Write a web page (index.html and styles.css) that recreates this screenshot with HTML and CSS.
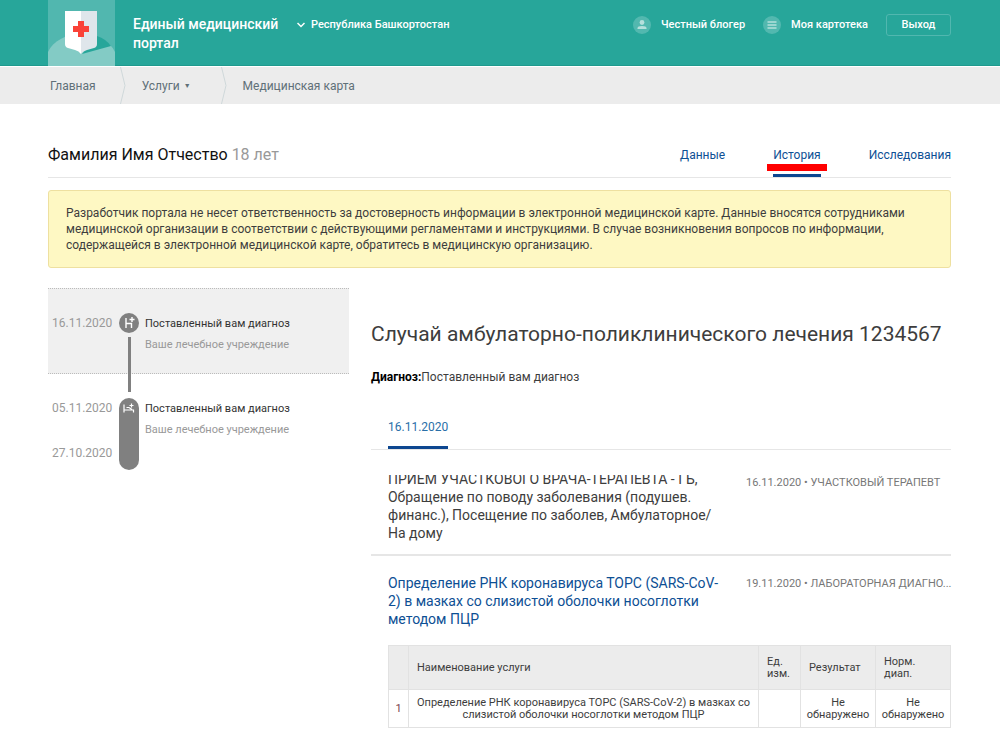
FILE: index.html
```
<!DOCTYPE html>
<html lang="ru">
<head>
<meta charset="utf-8">
<meta name="viewport" content="width=device-width, initial-scale=1">
<title>Единый медицинский портал</title>
<link rel="stylesheet" href="styles.css">
</head>
<body>
<header class="header">
  <a class="logo" href="#" aria-label="Главная страница портала">
    <svg viewBox="0 0 67 66" width="67" height="66" aria-hidden="true">
      <rect width="67" height="66" fill="#51b7af"/>
      <path d="M0 66V52C5 41 18 34 33 34C48 34 62 41 67 52V66Z" fill="#83cbc5"/>
      <path d="M34 54L49 36Q58 39 63 46Z" fill="#27a69a"/>
      <path d="M17 11H33V54Q31 51 27 50L20 48Q17 47 17 44Z" fill="#fff"/>
      <path d="M33 11H49V44Q49 47 46 48L39 50Q35 51 33 54Z" fill="#dfe6eb"/>
      <path d="M30 21H36V26H41V32H36V37H30V32H25V26H30Z" fill="#fa4238"/>
    </svg>
  </a>
  <a class="brand" href="#">Единый медицинский портал</a>
  <button class="region" type="button">
    <svg viewBox="0 0 8 6" width="8" height="6" aria-hidden="true"><path d="M0.500 1L4 4.500L7.500 1" fill="none" stroke="#fff" stroke-width="1.500"/></svg>
    Республика Башкортостан
  </button>
  <nav class="account" aria-label="Личный кабинет">
    <a class="account-link" href="#">
      <svg viewBox="0 0 18 18" width="18" height="18" aria-hidden="true"><circle cx="9" cy="9" r="9" fill="#52b8af"/><circle cx="9" cy="6.500" r="2.400" fill="#b5e0dc"/><path d="M4.500 13V12Q4.500 10 9 10Q13.500 10 13.500 12V13Z" fill="#b5e0dc"/></svg>
      Честный блогер
    </a>
    <a class="account-link" href="#">
      <svg viewBox="0 0 18 18" width="18" height="18" aria-hidden="true"><circle cx="9" cy="9" r="9" fill="#52b8af"/><path d="M4.500 6H13.500M4.500 9H13.500M4.500 12H13.500" stroke="#b5e0dc" stroke-width="1.600"/></svg>
      Моя картотека
    </a>
    <button class="logout" type="button">Выход</button>
  </nav>
</header>

<nav class="crumbs" aria-label="Навигация">
  <a class="crumb" href="#">Главная</a>
  <svg class="crumb-sep" viewBox="0 0 6 37" width="6" height="37" aria-hidden="true"><path d="M0.500 0L5 18.500L0.500 37" fill="none" stroke="#cfd8da"/></svg>
  <a class="crumb crumb-services" href="#">Услуги <span class="caret">▼</span></a>
  <svg class="crumb-sep" viewBox="0 0 6 37" width="6" height="37" aria-hidden="true"><path d="M0.500 0L5 18.500L0.500 37" fill="none" stroke="#cfd8da"/></svg>
  <a class="crumb" href="#">Медицинская карта</a>
</nav>

<main class="page">
  <div class="patient">
    <h1 class="patient-name">Фамилия Имя Отчество <span class="patient-age">18 лет</span></h1>
    <nav class="tabs" aria-label="Разделы карты">
      <a class="tab" href="#">Данные</a>
      <a class="tab tab-active" href="#" aria-current="page">История</a>
      <a class="tab" href="#">Исследования</a>
    </nav>
  </div>

  <p class="notice">Разработчик портала не несет ответственность за достоверность информации в электронной медицинской карте. Данные вносятся сотрудниками медицинской организации в соответствии с действующими регламентами и инструкциями. В случае возникновения вопросов по информации, содержащейся в электронной медицинской карте, обратитесь в медицинскую организацию.</p>

  <div class="columns">
    <ol class="timeline">
      <li class="visit visit-selected">
        <div class="dates"><time>16.11.2020</time></div>
        <div class="marker marker-linked">
          <svg viewBox="0 0 20 20" width="20" height="20" aria-hidden="true"><path d="M7 5V15M7 10.500H12.500V15M13 4V9M10.500 6.500H15.500" fill="none" stroke="#fff" stroke-width="1.400"/></svg>
        </div>
        <div class="visit-text"><a class="diagnosis" href="#">Поставленный вам диагноз</a><span class="clinic">Ваше лечебное учреждение</span></div>
      </li>
      <li class="visit">
        <div class="dates"><time>05.11.2020</time><time>27.10.2020</time></div>
        <div class="marker marker-long">
          <svg viewBox="0 0 20 20" width="20" height="20" aria-hidden="true"><path d="M5 6.500V14.500M5 12H14.500V14.500M7.500 9.500H10L13 11.500M12.500 5.500V9.500M10.500 7.500H14.500" fill="none" stroke="#fff" stroke-width="1.200"/></svg>
        </div>
        <div class="visit-text"><a class="diagnosis" href="#">Поставленный вам диагноз</a><span class="clinic">Ваше лечебное учреждение</span></div>
      </li>
    </ol>

    <section class="case">
      <h2 class="case-title">Случай амбулаторно-поликлинического лечения 1234567</h2>
      <p class="case-diagnosis"><b>Диагноз:</b>Поставленный вам диагноз</p>
      <nav class="case-dates" aria-label="Даты приёмов"><a class="case-date" href="#">16.11.2020</a></nav>

      <article class="record record-scrolled">
        <h3 class="record-title">ПРИЕМ УЧАСТКОВОГО ВРАЧА-ТЕРАПЕВТА - ГБ, Обращение по поводу заболевания (подушев. финанс.), Посещение по заболев, Амбулаторное/<wbr>На дому</h3>
        <p class="record-meta">16.11.2020 • УЧАСТКОВЫЙ ТЕРАПЕВТ</p>
      </article>

      <article class="record">
        <h3 class="record-title"><a href="#">Определение РНК коронавируса ТОРС (SARS-CoV-2) в мазках со слизистой оболочки носоглотки методом ПЦР</a></h3>
        <p class="record-meta">19.11.2020 • ЛАБОРАТОРНАЯ ДИАГНО...</p>
      </article>

      <table class="results">
        <colgroup><col class="col-number"><col><col class="col-unit"><col class="col-value"><col class="col-value"></colgroup>
        <thead>
          <tr><th></th><th>Наименование услуги</th><th>Ед. изм.</th><th>Результат</th><th>Норм. диап.</th></tr>
        </thead>
        <tbody>
          <tr><td class="number">1</td><td>Определение РНК коронавируса ТОРС (SARS-CoV-2) в мазках со слизистой оболочки носоглотки методом ПЦР</td><td></td><td>Не обнаружено</td><td>Не обнаружено</td></tr>
        </tbody>
      </table>
    </section>
  </div>
</main>
</body>
</html>
```
FILE: styles.css
```
* {
  box-sizing: border-box;
}

body {
  margin: 0;
  background: #fff;
  color: #3d3d3d;
  font-family: Roboto, "Liberation Sans", sans-serif;
  font-size: 12px;
  line-height: 16px;
}

a {
  color: inherit;
  text-decoration: none;
}

button {
  padding: 0;
  border: 0;
  background: none;
  color: inherit;
  font: inherit;
}

h1, h2, h3, p, ol {
  margin: 0;
  padding: 0;
  font-weight: 400;
}

svg {
  display: block;
  flex: none;
}

.header {
  display: flex;
  align-items: flex-start;
  height: 66px;
  padding: 0 49px 0 48px;
  border-bottom: 1px solid #1f9a8e;
  background: #27a69a;
  color: #fff;
  font-size: 11px;
  font-weight: 500;
}

.brand {
  width: 150px;
  margin: 15px 14px 0 18px;
  font-size: 14px;
  line-height: 19px;
}

.region {
  display: flex;
  align-items: center;
  gap: 6px;
  margin-top: 17px;
}

.account {
  display: flex;
  align-items: center;
  gap: 18px;
  margin: 14px 0 0 auto;
}

.account-link {
  display: flex;
  align-items: center;
  gap: 10px;
}

.logout {
  width: 65px;
  height: 22px;
  border: 1px solid #51b7af;
  border-radius: 3px;
}

.crumbs {
  display: flex;
  align-items: center;
  height: 38px;
  padding: 0 50px;
  border-top: 1px solid #fff;
  background: #ececec;
  color: #607078;
}

.crumb-sep {
  margin: 0 16px 0 24px;
}

.crumb-services {
  display: flex;
  gap: 4px;
  margin-right: 6px;
}

.caret {
  font-size: 7px;
}

.page {
  padding: 35px 49px 10px 48px;
}

.patient {
  display: flex;
  justify-content: space-between;
  border-bottom: 1px solid #e6e6e6;
}

.patient-name {
  color: #111;
  font-size: 16px;
  line-height: 31px;
}

.patient-age {
  color: #999;
}

.tabs {
  display: flex;
  gap: 48px;
}

.tab {
  position: relative;
  height: 38px;
  color: #0d4f94;
  line-height: 33px;
}

.tab-active {
  border-bottom: 3px solid #0d4790;
}

.tab-active::after {
  position: absolute;
  top: 25px;
  right: -6px;
  left: -6px;
  height: 7px;
  background: #f00;
  content: "";
}

.notice {
  margin-top: 12px;
  padding: 14px 17px;
  border: 1px solid #eee0a0;
  border-radius: 3px;
  background: #fef8c3;
}

.columns {
  display: flex;
  gap: 22px;
  margin-top: 20px;
}

.timeline {
  flex: 0 0 33.333%;
  list-style: none;
}

.visit {
  display: flex;
  min-height: 86px;
  padding: 24px 4px 0;
}

.visit-selected {
  border-top: 1px dotted #bbb;
  border-bottom: 1px dotted #bbb;
  background: #f0f0f0;
}

.dates {
  display: flex;
  flex-direction: column;
  gap: 25px;
  width: 67px;
  color: #999;
  line-height: 20px;
}

.marker {
  position: relative;
  width: 20px;
  height: 20px;
  margin-right: 6px;
  border-radius: 10px;
  background: #808080;
}

.marker-linked::after {
  position: absolute;
  top: 24px;
  left: 9px;
  width: 3px;
  height: 55px;
  background: #808080;
  content: "";
}

.marker-long {
  height: 72px;
}

.visit-text {
  display: flex;
  flex-direction: column;
  color: #333;
  font-size: 11px;
  line-height: 21px;
}

.clinic {
  color: #999;
}

.case {
  flex: 1;
  min-width: 0;
  padding-top: 32px;
}

.case-title {
  font-size: 21px;
  line-height: 28px;
}

.case-diagnosis {
  margin-top: 21px;
}

.case-diagnosis b {
  color: #000;
}

.case-dates {
  display: flex;
  margin-top: 34px;
  padding-left: 17px;
  border-bottom: 1px solid #e6e6e6;
}

.case-date {
  height: 30px;
  border-bottom: 3px solid #0d4790;
  color: #2a6fa8;
}

.record {
  display: flex;
  gap: 20px;
  padding: 18px 0 17px 17px;
}

.record-scrolled {
  height: 81px;
  margin-top: 25px;
  padding: 0 0 0 17px;
  border-bottom: 2px solid #e6e6e6;
  overflow: hidden;
}

.record-scrolled .record-title {
  margin-top: -5px;
}

.record-scrolled .record-meta {
  margin-top: -2px;
}

.record-title {
  flex: 0 0 338px;
  font-size: 14px;
  line-height: 18px;
}

.record-title a {
  color: #0d4f94;
}

.record-meta {
  color: #777;
  font-size: 11px;
  line-height: 20px;
  white-space: nowrap;
}

.results {
  width: calc(100% - 17px);
  margin-left: 17px;
  border-collapse: collapse;
  table-layout: fixed;
  font-size: 11px;
  line-height: 12px;
}

.results th {
  height: 44px;
  padding: 0 8px;
  border: 1px solid #e2e2e2;
  background: #ececec;
  font-weight: 400;
  text-align: left;
}

.results td {
  height: 38px;
  padding: 0 5px;
  border: 1px solid #e2e2e2;
  text-align: center;
}

.col-number {
  width: 20px;
}

.col-unit {
  width: 42px;
}

.col-value {
  width: 75px;
}

.results .number {
  color: #7a3d4d;
}
```
